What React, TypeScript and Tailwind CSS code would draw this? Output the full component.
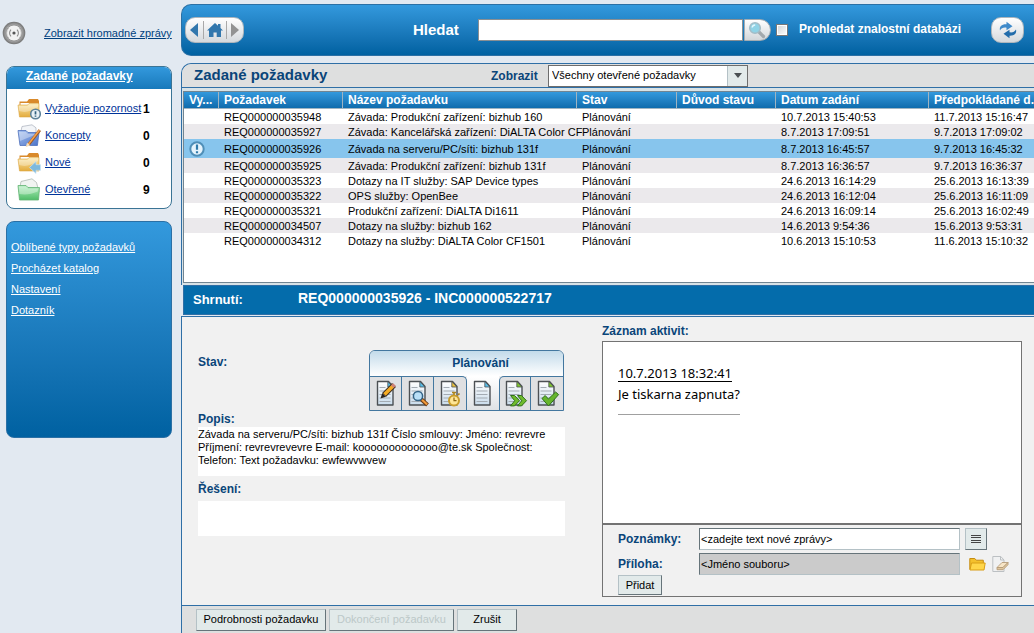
import React, { useState } from 'react';

interface RequestRow {
  id: string;
  name: string;
  status: string;
  created: string;
  expected: string;
  attention?: boolean;
}

const REQUESTS: RequestRow[] = [
  { id: 'REQ000000035948', name: 'Závada: Produkční zařízení: bizhub 160', status: 'Plánování', created: '10.7.2013 15:40:53', expected: '11.7.2013 15:16:47' },
  { id: 'REQ000000035927', name: 'Závada: Kancelářská zařízení: DiALTA Color CF', status: 'Plánování', created: '8.7.2013 17:09:51', expected: '9.7.2013 17:09:02' },
  { id: 'REQ000000035926', name: 'Závada na serveru/PC/síti: bizhub 131f', status: 'Plánování', created: '8.7.2013 16:45:57', expected: '9.7.2013 16:45:32', attention: true },
  { id: 'REQ000000035925', name: 'Závada: Produkční zařízení: bizhub 131f', status: 'Plánování', created: '8.7.2013 16:36:57', expected: '9.7.2013 16:36:37' },
  { id: 'REQ000000035323', name: 'Dotazy na IT služby: SAP Device types', status: 'Plánování', created: '24.6.2013 16:14:29', expected: '25.6.2013 16:13:39' },
  { id: 'REQ000000035322', name: 'OPS služby: OpenBee', status: 'Plánování', created: '24.6.2013 16:12:04', expected: '25.6.2013 16:11:09' },
  { id: 'REQ000000035321', name: 'Produkční zařízení: DiALTA Di1611', status: 'Plánování', created: '24.6.2013 16:09:14', expected: '25.6.2013 16:02:49' },
  { id: 'REQ000000034507', name: 'Dotazy na služby: bizhub 162', status: 'Plánování', created: '14.6.2013 9:54:36', expected: '15.6.2013 9:53:31' },
  { id: 'REQ000000034312', name: 'Dotazy na služby: DiALTA Color CF1501', status: 'Plánování', created: '10.6.2013 15:10:53', expected: '11.6.2013 15:10:32' },
];

type FolderKind = 'attention' | 'draft' | 'new' | 'open';

const COUNTERS: { kind: FolderKind; label: string; count: number }[] = [
  { kind: 'attention', label: 'Vyžaduje pozornost', count: 1 },
  { kind: 'draft', label: 'Koncepty', count: 0 },
  { kind: 'new', label: 'Nové', count: 0 },
  { kind: 'open', label: 'Otevřené', count: 9 },
];

const LINKS = ['Oblíbené typy požadavků', 'Procházet katalog', 'Nastavení', 'Dotazník'];

const STEPS = ['draft', 'review', 'waiting', 'planning', 'progress', 'done'] as const;
type Step = (typeof STEPS)[number];

const RAISED = 'border border-t-[#b4c1c6] border-l-[#b4c1c6] border-r-[#66747a] border-b-[#66747a] bg-[#e2eaea]';
const SUNKEN = 'border border-t-[#66747a] border-l-[#66747a] border-r-[#b4c1c6] border-b-[#b4c1c6]';

function Gradients() {
  return (
    <svg width="0" height="0" className="absolute" aria-hidden="true">
      <defs>
        <linearGradient id="yellow" x1="0" y1="0" x2="0" y2="1">
          <stop offset="0" stopColor="#fbe9b0" />
          <stop offset="1" stopColor="#e3ab3c" />
        </linearGradient>
        <linearGradient id="blue" x1="0" y1="0" x2="1" y2="1">
          <stop offset="0" stopColor="#a9c3f0" />
          <stop offset="1" stopColor="#4a72c8" />
        </linearGradient>
        <linearGradient id="green" x1="0" y1="0" x2="0" y2="1">
          <stop offset="0" stopColor="#b5eec0" />
          <stop offset="1" stopColor="#4fbd68" />
        </linearGradient>
        <linearGradient id="paper" x1="0" y1="0" x2="0" y2="1">
          <stop offset="0" stopColor="#ffffff" />
          <stop offset="1" stopColor="#c9dcec" />
        </linearGradient>
        <radialGradient id="metal">
          <stop offset="0.5" stopColor="#f4f4f4" />
          <stop offset="0.75" stopColor="#a2a2a2" />
          <stop offset="1" stopColor="#707070" />
        </radialGradient>
      </defs>
    </svg>
  );
}

function BroadcastIcon() {
  return (
    <svg width="24" height="24" viewBox="0 0 24 24" aria-hidden="true">
      <circle cx="12" cy="12" r="11.3" fill="url(#metal)" />
      <circle cx="12" cy="12" r="8" fill="#f2f2f2" stroke="#858585" strokeWidth="0.8" />
      <circle cx="12" cy="12" r="1.6" fill="#555" />
      <path d="M9 8.6a4.8 4.8 0 0 0 0 6.8M15 8.6a4.8 4.8 0 0 1 0 6.8" fill="none" stroke="#8a8a8a" strokeWidth="1.1" />
      <path d="M6.9 6.8a7 7 0 0 0 0 10.4M17.1 6.8a7 7 0 0 1 0 10.4" fill="none" stroke="#b0b0b0" strokeWidth="0.8" />
    </svg>
  );
}

function FolderIcon({ kind }: { kind: FolderKind }) {
  if (kind === 'attention' || kind === 'new') {
    return (
      <svg width="24" height="22" viewBox="0 0 24 22" aria-hidden="true">
        <path d="M10 3.500l2-2.500h9l1 2v14H2.500V3.500z" fill="#d98a2b" />
        <path d="M3.500 5h17.500v4H3.500z" fill="#fff" />
        <path d="M1 7h9.500L12 5.500h10V19H2.500z" fill="url(#yellow)" stroke="#dca748" strokeWidth="0.6" />
        <path d="M2 12.500c5 3 12 1 19-3.500V6.500h-9L10.500 8h-8.500z" fill="#fff" opacity="0.3" />
        {kind === 'attention' ? (
          <g>
            <circle cx="18.500" cy="16" r="4.800" fill="#e9f1f6" stroke="#5d8299" strokeWidth="1.600" />
            <path d="M18.500 13.300v3.200M18.500 17.400v1.300" stroke="#31617e" strokeWidth="1.700" />
          </g>
        ) : (
          <path d="M12.500 15.500l6.500-6v3.200h4.500v5.600H19v3.200z" fill="#7db9dd" stroke="#c9e2f2" strokeWidth="0.7" />
        )}
      </svg>
    );
  }
  if (kind === 'draft') {
    return (
      <svg width="24" height="24" viewBox="0 0 24 24" aria-hidden="true">
        <path d="M5 2.5L15 .8l4 3v8H3z" fill="#f3f5f8" stroke="#a8afba" strokeWidth="0.7" />
        <path d="M1 6.5h8l2 2h11l-1.6 13H3z" fill="url(#blue)" stroke="#4f71bd" strokeWidth="0.8" />
        <path d="M2 8h7l2 2h9l-17 7z" fill="#fff" opacity="0.35" />
        <path d="M22.8 6.2L11.5 20.7" stroke="#a0571d" strokeWidth="3" />
        <path d="M22.5 6L11.2 20.5" stroke="#f4a14d" strokeWidth="1.6" />
        <path d="M10 18.8l3.3 2.5-4.6 2z" fill="#f6dfbc" />
      </svg>
    );
  }
  return (
    <svg width="24" height="24" viewBox="0 0 24 24" aria-hidden="true">
      <path d="M4 3.5L15 .8l4.500 3.7L22 14H2z" fill="#f1f4f1" stroke="#a5b0a7" strokeWidth="0.7" />
      <path d="M1 7.500h8l2 2h11.500l-1 12.500h-19z" fill="url(#green)" stroke="#62b374" strokeWidth="0.8" />
      <path d="M2 8.500h7l2 2h10l-.3 3C14 16.500 8 17 2.400 16z" fill="#fff" opacity="0.35" />
    </svg>
  );
}

function PageIcon({ step }: { step: Step }) {
  const green = step === 'progress' || step === 'done';
  const corner = green ? '#7ec52f' : step === 'waiting' ? '#e8bf3c' : '#58bde8';
  return (
    <svg width="28" height="30" viewBox="0 0 28 30" aria-hidden="true">
      <path d="M5.500 2.500h11L21 7.500v18.500H5.500z" fill="url(#paper)" stroke="#4c5054" strokeWidth="1.400" strokeLinejoin="round" />
      <path d="M15.800 2.500L21 8h-5.200z" fill={corner} stroke="#4c5054" strokeWidth="0.800" />
      <path d="M7.500 8.500h6M7.500 12h11M7.500 15.500h11M7.500 19h11M7.500 22.500h11" stroke="#a3abb3" strokeWidth="1" />
      {step === 'draft' && (
        <g>
          <path d="M22 6L12 16" stroke="#3c2d20" strokeWidth="5.500" />
          <path d="M21 7L12.500 15.500" stroke="#f5ac24" strokeWidth="3.500" />
          <path d="M22.500 5.500L20.300 7.700" stroke="#ce8176" strokeWidth="3.800" />
          <path d="M10.200 14.200l3.600 3.600-5.300 1.700z" fill="#29231e" />
        </g>
      )}
      {step === 'review' && (
        <g>
          <path d="M17 20l6.500 6" stroke="#663713" strokeWidth="4" />
          <path d="M18 20.800l5.200 4.700" stroke="#f29a3a" strokeWidth="2.200" />
          <circle cx="14" cy="17" r="4.600" fill="#b9dff7" stroke="#346386" strokeWidth="1.500" />
        </g>
      )}
      {step === 'waiting' && (
        <g>
          <path d="M18 13.500v3M22 16l1.500-1.500M16 13.500h4" stroke="#ad841e" strokeWidth="1.700" />
          <circle cx="18" cy="21.500" r="5" fill="#ffe696" stroke="#c99d2b" strokeWidth="2" />
          <path d="M18 18.500v3.200h2.500" fill="none" stroke="#8b6512" strokeWidth="1.200" />
        </g>
      )}
      {step === 'progress' && (
        <path d="M9.500 16.500h4l5 5.200-5 5.200h-4l4.200-5.200zM16.500 16.500h4l5 5.200-5 5.200h-4l4.200-5.200z" fill="#6fbb2d" stroke="#31731b" strokeWidth="1" />
      )}
      {step === 'done' && <path d="M9 19.500l3.200-3 3.200 3.500 7.200-7 3 2.600L15.500 27z" fill="#66b52d" stroke="#2e701b" strokeWidth="1" />}
    </svg>
  );
}

function AttentionIcon() {
  return (
    <svg width="16" height="16" viewBox="0 0 16 16" className="block" role="img" aria-label="Vyžaduje pozornost">
      <circle cx="8" cy="8" r="6.700" fill="#e4f3fc" stroke="#4f8fb8" strokeWidth="2" />
      <path d="M8 3.500v5.300M8 10.300v2" stroke="#2f7aaa" strokeWidth="2.200" />
    </svg>
  );
}

function Sidebar() {
  return (
    <aside className="w-[181px] shrink-0 pr-[9px] pl-[6px]">
      <div className="-ml-1 flex h-[66px] items-center gap-[18px]">
        <BroadcastIcon />
        <a href="#zpravy" className="whitespace-nowrap pt-px text-[#003f7d] underline">Zobrazit hromadné zprávy</a>
      </div>

      <section className="overflow-hidden rounded-[8px] border border-[#3b7495] bg-white">
        <h2 className="h-[22px] bg-linear-to-b from-[#3399dd] to-[#1779bb] pl-[19px] text-[12px] leading-[19px] font-bold text-white">
          <a href="#pozadavky" className="underline">Zadané požadavky</a>
        </h2>
        <ul className="pt-[6px] pb-[5px]">
          {COUNTERS.map((item) => (
            <li key={item.kind} className="flex h-[27px] items-center pl-[10px]">
              <FolderIcon kind={item.kind} />
              <a href={`#${item.kind}`} className="ml-1 w-[98px] whitespace-nowrap text-[#003399] underline">{item.label}</a>
              <span className="text-[12px] font-bold">{item.count}</span>
            </li>
          ))}
        </ul>
      </section>

      <nav className="mt-3 h-[217px] rounded-[8px] border border-[#2b70a5] bg-linear-to-b from-[#3399dd] to-[#0061a1] pt-[15px] pl-1">
        {LINKS.map((label) => (
          <a key={label} href="#odkaz" className="block leading-[21px] text-white underline">{label}</a>
        ))}
      </nav>
    </aside>
  );
}

function TopBar() {
  return (
    <header className="flex h-[52px] items-center rounded-l-[10px] border border-r-0 border-[#2b70a5] bg-linear-to-b from-[#3399dd] to-[#0061a1] pr-[10px] pl-[3px] text-white">
      <div className="mr-[169px] flex h-[26px] w-[59px] shrink-0 items-center rounded-[10px] border border-[#aeb6bd] bg-linear-to-b from-white to-[#d5d9dd]">
        <button aria-label="Zpět" className="flex h-full flex-1 items-center justify-center">
          <svg width="8" height="14" viewBox="0 0 8 14"><path d="M8 0v14L0 7z" fill="#3277ad" /></svg>
        </button>
        <button aria-label="Domů" className="flex h-[18px] w-6 items-center justify-center border-x border-[#a9a9a9]">
          <svg width="16" height="14" viewBox="0 0 16 14"><path d="M8 0l3 2.700V1h2.500v4L16 7.500h-2V14H9.700V9.500H6.500V14H2V7.500H0z" fill="#3277ad" /></svg>
        </button>
        <button aria-label="Vpřed" className="flex h-full flex-1 items-center justify-center">
          <svg width="8" height="14" viewBox="0 0 8 14"><path d="M0 0v14l8-7z" fill="#929292" /></svg>
        </button>
      </div>

      <label htmlFor="search" className="w-[65px] shrink-0 text-[15px] font-bold">Hledat</label>
      <input id="search" type="text" className="h-[22px] min-w-0 flex-1 border border-[#8a8f93] bg-white px-1 text-black" />
      <button aria-label="Spustit hledání" className="ml-px flex h-[22px] w-[27px] shrink-0 items-center justify-center rounded-r-[11px] border border-[#a4acb2] bg-linear-to-b from-white to-[#d3d7da]">
        <svg width="18" height="18" viewBox="0 0 18 18">
          <path d="M10.500 10.500l5 5" stroke="#a3a9ad" strokeWidth="3.200" strokeLinecap="round" />
          <circle cx="7" cy="7" r="5.300" fill="#8fd3e6" stroke="#a3bcc6" strokeWidth="1.500" />
          <path d="M4.200 6.500a3 3 0 0 1 3-2.500" fill="none" stroke="#e4f8fd" strokeWidth="1.500" />
        </svg>
      </button>
      <input
        id="knowledge"
        type="checkbox"
        className="ml-[5px] size-3 shrink-0 appearance-none border border-[#777] bg-linear-to-br from-[#cfd3d6] to-white outline outline-1 -outline-offset-2 outline-white checked:bg-[#3277ad]"
      />
      <label htmlFor="knowledge" className="ml-[11px] shrink-0 pb-[3px] text-[12px] font-bold">Prohledat znalostní databázi</label>
      <button aria-label="Obnovit" className="ml-[30px] flex h-[26px] w-[33px] shrink-0 items-center justify-center rounded-[10px] border border-[#aeb6bd] bg-linear-to-b from-white to-[#d5d9dd]">
        <svg width="18" height="18" viewBox="0 0 18 18">
          <path d="M1 9.500C0 5.500 3 3 7.500 3.300V.8L13.500 5.200 7.500 9.200V6.700C4.500 6.300 2.500 7 1 9.500z" fill="#3f8aca" />
          <path d="M17 8.500c1 4-2 6.500-6.500 6.200v2.500L4.500 12.800l6-4v2.500c3 .4 5-.3 6.500-2.800z" fill="#226cab" />
        </svg>
      </button>
    </header>
  );
}

function RequestTable() {
  const [selected, setSelected] = useState('REQ000000035926');

  const rowColor = (row: RequestRow, index: number) => {
    if (row.id === selected) return 'bg-[#87c5ed]';
    return index % 2 ? 'bg-[#ebe9ec]' : 'bg-white';
  };

  return (
    <section className="mt-[7px] rounded-tl-[10px] border-t border-l border-[#2f6fa6] bg-[#d8e2e6] pb-[2px]">
      <div className="flex h-6 items-center rounded-tl-[10px] border-b border-[#2f6fa6] bg-[#dedfdf] pl-3 font-bold text-[#0a4579]">
        <h1 className="w-[297px] shrink-0 text-[15px]">Zadané požadavky</h1>
        <label htmlFor="filter" className="w-[57px] shrink-0 text-[12px]">Zobrazit</label>
        <div className="relative w-[200px]">
          <select id="filter" className="block h-[22px] w-full appearance-none border border-[#6d6d6d] bg-white pl-[3px] font-normal text-black">
            <option>Všechny otevřené požadavky</option>
          </select>
          <span className="pointer-events-none absolute inset-y-px right-px flex w-5 items-center justify-center border-l border-[#b4c1c6] bg-[#e2eaea]">
            <svg width="8" height="5" viewBox="0 0 8 5"><path d="M0 0h8L4 5z" fill="#4a4f52" /></svg>
          </span>
        </div>
      </div>

      <div className="mt-[3px] ml-px h-[192px] overflow-hidden border border-r-0 border-[#718592] bg-white">
        <table className="w-full table-fixed border-separate border-spacing-0">
          <colgroup>
            <col className="w-[35px]" />
            <col className="w-[124px]" />
            <col className="w-[234px]" />
            <col className="w-[100px]" />
            <col className="w-[99px]" />
            <col className="w-[153px]" />
            <col />
          </colgroup>
          <thead>
            <tr className="h-[17px] bg-linear-to-b from-[#3399dd] to-[#0b69aa] text-left text-[12px] leading-[15px] whitespace-nowrap text-white *:overflow-hidden *:border-r *:border-b *:border-[#9fb4c2] *:p-0 *:pl-[5px] *:last:border-r-0">
              <th>Vy...</th>
              <th>Požadavek</th>
              <th>Název požadavku</th>
              <th>Stav</th>
              <th>Důvod stavu</th>
              <th>Datum zadání</th>
              <th>Předpokládané d.</th>
            </tr>
          </thead>
          <tbody>
            {REQUESTS.map((row, i) => (
              <tr
                key={row.id}
                onClick={() => setSelected(row.id)}
                className={`${row.attention ? 'h-[19px]' : 'h-[15px]'} ${rowColor(row, i)} leading-[14px] whitespace-nowrap *:p-0 *:pt-px *:pl-[5px]`}
              >
                <td>{row.attention && <AttentionIcon />}</td>
                <td>{row.id}</td>
                <td>{row.name}</td>
                <td>{row.status}</td>
                <td></td>
                <td>{row.created}</td>
                <td>{row.expected}</td>
              </tr>
            ))}
          </tbody>
        </table>
      </div>
    </section>
  );
}

function StatusSteps() {
  return (
    <div className="w-[195px] overflow-hidden rounded-t-[6px] border border-[#43779f]">
      <div className="h-[25px] bg-linear-to-b from-[#c3dbea] to-white pl-7 text-center text-[12px] leading-6 font-bold text-[#0a4579]">
        Plánování
      </div>
      <div className="grid grid-cols-6">
        {STEPS.map((step) => (
          <button
            key={step}
            aria-label={step}
            className={`flex h-[34px] items-center justify-center border-t ${
              step === 'planning'
                ? 'border-white bg-linear-to-b from-white to-[#dfe2e5]'
                : `border-[#43779f] bg-[#dfe0e2] ${step === 'draft' || step === 'review' ? 'border-r' : ''} ${
                    step === 'waiting' ? 'rounded-tr-[5px] border-r' : ''
                  } ${step === 'progress' ? 'rounded-tl-[5px] border-x' : ''}`
            }`}
          >
            <PageIcon step={step} />
          </button>
        ))}
      </div>
    </div>
  );
}

function ActivityLog() {
  return (
    <section className="min-w-0 flex-1">
      <h3 className="text-[12px] leading-[16px] font-bold text-[#0a4579]">Záznam aktivit:</h3>
      <div className="mt-[2px] border border-[#737373]">
        <div className="h-[183px] border-b-2 border-[#737373] bg-white px-[15px] pt-[21px] font-['Noto_Sans',sans-serif] text-[13px] leading-[21px]">
          <div className="inline-block">
            <p className="underline underline-offset-3">10.7.2013 18:32:41</p>
            <p>Je tiskarna zapnuta?</p>
            <hr className="mt-[9px] border-[#a0a0a0]" />
          </div>
        </div>
        <div className="grid grid-cols-[81px_1fr_61px] items-center gap-y-[3px] pt-[3px] pl-[15px]">
          <label htmlFor="note" className="text-[12px] font-bold text-[#0a4579]">Poznámky:</label>
          <input id="note" type="text" defaultValue="<zadejte text nové zprávy>" className={`h-[22px] min-w-0 bg-white px-px ${SUNKEN}`} />
          <button aria-label="Rozbalit text" className={`ml-[5px] flex size-[22px] items-center justify-center ${RAISED}`}>
            <svg width="10" height="10" viewBox="0 0 10 10"><path d="M0 1.500h10M0 3.500h10M0 6.500h10M0 8.500h10" stroke="#444" strokeWidth="1" /></svg>
          </button>
          <label htmlFor="file" className="text-[12px] font-bold text-[#0a4579]">Příloha:</label>
          <input id="file" type="text" readOnly value="<Jméno souboru>" className={`h-[22px] min-w-0 bg-[#cbcbcb] px-px ${SUNKEN}`} />
          <div className="flex items-center gap-[6px] pl-[9px]">
            <button aria-label="Vybrat soubor">
              <svg width="17" height="14" viewBox="0 0 17 14" className="block">
                <path d="M.8 12.500V1.500h5l1.500 1.700h7v3" fill="#f4c02c" stroke="#c68c11" strokeWidth="1" />
                <path d="M1 13l1.500-7h13.700L15 13z" fill="#ffd64a" stroke="#d99e17" strokeWidth="1" />
              </svg>
            </button>
            <button aria-label="Odebrat soubor">
              <svg width="17" height="16" viewBox="0 0 17 16" className="block">
                <path d="M.8.5h8L12 4v11.500H.8z" fill="#f0f1f2" stroke="#bcc0c3" strokeWidth="1" />
                <path d="M8.500.5V4H12" fill="none" stroke="#bcc0c3" />
                <path d="M5 11.500L10 6.500h6L11 11.500z" fill="#f7e5c6" stroke="#b59c79" strokeWidth="0.900" />
                <path d="M5 11.500h6l5-5v2.200L11 13.700H5z" fill="#e0c79f" stroke="#b59c79" strokeWidth="0.900" />
              </svg>
            </button>
          </div>
        </div>
        <button className={`mb-px ml-[15px] block h-5 w-11 ${RAISED}`}>Přidat</button>
      </div>
    </section>
  );
}

function RequestDetail() {
  return (
    <section className="mt-px flex flex-1 gap-[37px] border-t border-l border-[#2f6fa6] bg-[#f1f1f1] pt-[6px] pr-3 pb-2 pl-4">
      <div className="w-[367px] shrink-0 pt-[27px]">
        <div className="flex items-start justify-between pr-px">
          <h3 className="pt-1 text-[12px] leading-4 font-bold text-[#0a4579]">Stav:</h3>
          <StatusSteps />
        </div>
        <h3 className="text-[12px] leading-[16px] font-bold text-[#0a4579]">Popis:</h3>
        <p className="h-[49px] bg-white pt-px leading-[13px]">
          Závada na serveru/PC/síti: bizhub 131f Číslo smlouvy: Jméno: revrevre Příjmení: revrevrevevre E-mail:
          kooooooooooooo@te.sk Společnost: Telefon: Text požadavku: ewfewvwvew
        </p>
        <h3 className="mt-[5px] text-[12px] leading-[16px] font-bold text-[#0a4579]">Řešení:</h3>
        <div className="mt-1 h-[35px] bg-white" />
      </div>
      <ActivityLog />
    </section>
  );
}

export default function App() {
  return (
    <div className="flex min-h-screen overflow-hidden bg-[#e2e9f1] font-['Liberation_Sans',Arial,sans-serif] text-[11px] text-black">
      <Gradients />
      <Sidebar />
      <main className="flex min-w-0 flex-1 flex-col pt-1">
        <TopBar />
        <RequestTable />
        <div className="ml-[2px] flex h-[30px] shrink-0 items-center border border-r-0 border-[#2f6fa6] bg-[#046cab] pl-[9px] font-bold text-white">
          <h2 className="w-[105px] text-[13px]">Shrnutí:</h2>
          <p className="pb-[3px] text-[14px]">REQ000000035926 - INC000000522717</p>
        </div>
        <RequestDetail />
        <footer className="flex h-7 shrink-0 items-center gap-[3px] border-t border-l border-[#2f6fa6] bg-[#dedfdf] pl-[14px]">
          <button className={`h-[22px] w-[130px] ${RAISED}`}>Podrobnosti požadavku</button>
          <button disabled className={`h-[22px] w-[125px] text-[#bcc8c8] ${RAISED}`}>Dokončení požadavku</button>
          <button className={`h-[22px] w-[60px] ${RAISED}`}>Zrušit</button>
        </footer>
      </main>
    </div>
  );
}
